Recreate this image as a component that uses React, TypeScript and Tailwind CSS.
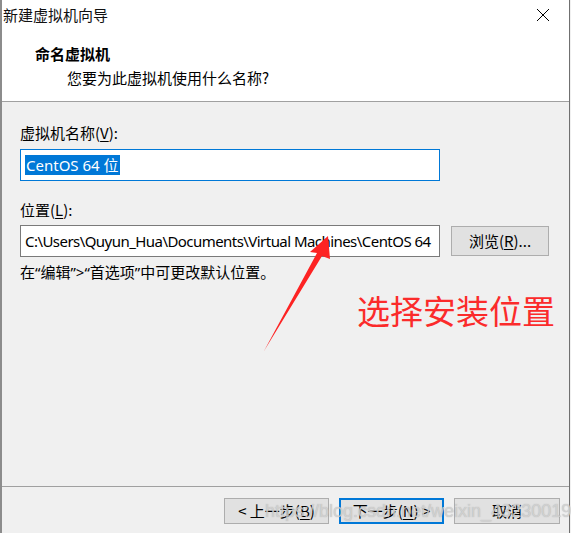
import React from 'react';

const ui = { fontFamily: '"Segoe UI", "Noto Sans", "Noto Sans CJK SC", sans-serif' };
const cjk = { fontFamily: '"Noto Sans CJK SC", "Noto Sans", sans-serif' };

function Key({ k }: { k: string }) {
  return <span className="underline underline-offset-2">{k}</span>;
}

function Q({ c }: { c: string }) {
  return <span style={ui}>{c}</span>;
}

function WinButton({ children, primary }: { children: React.ReactNode; primary?: boolean }) {
  return (
    <div
      className={`flex h-[26px] items-center justify-center bg-[#e1e1e1] text-[15px] text-black ${
        primary ? 'border-2 border-[#0078d7]' : 'border border-[#adadad]'
      }`}
    >
      {children}
    </div>
  );
}

export default function App() {
  return (
    <div className="relative h-[533px] w-[571px] overflow-hidden bg-[#f0f0f0]" style={cjk}>
      <div className="flex h-full w-[570px] flex-col border-l-2 border-r border-l-[#8c8c8c] border-r-[#707070]">
        {/* Header */}
        <div className="h-[102px] shrink-0 border-b border-[#a0a0a0] bg-white">
          <div className="flex h-[29px] items-center justify-between pl-[1px] pr-[19px]">
            <span className="text-[15px] leading-none text-[#111]">新建虚拟机向导</span>
            <svg width="14" height="14" viewBox="0 0 14 14" className="text-black">
              <path d="M1 1 L13 13 M13 1 L1 13" stroke="currentColor" strokeWidth="1" />
            </svg>
          </div>
          <div className="pl-[33px] pt-[16px] text-[15px] font-bold leading-[18px] text-black">命名虚拟机</div>
          <div className="pl-[65px] pt-[6px] text-[15px] leading-[18px] text-black">您要为此虚拟机使用什么名称?</div>
        </div>

        {/* Body */}
        <div className="flex flex-1 flex-col px-[18px]">
          <div className="pt-[22px] text-[15px] leading-[18px] text-black">
            虚拟机名称(<Key k="V" />):
          </div>
          <div className="mt-[7px] flex h-[32px] w-[420px] items-center border border-[#0078d7] bg-white pl-[4px]">
            <span className="bg-[#0078d7] px-[1px] text-[15px] leading-[20px] text-white" style={ui}>
              CentOS 64 位
            </span>
          </div>

          <div className="pt-[20px] text-[15px] leading-[18px] text-black">
            位置(<Key k="L" />):
          </div>
          <div className="mt-[6px] flex items-center gap-[11px]">
            <div className="flex h-[32px] w-[420px] items-center overflow-hidden whitespace-nowrap border border-[#7a7a7a] bg-white pl-[4px] text-[15px] tracking-[-0.55px] text-black" style={ui}>
              C:\Users\Quyun_Hua\Documents\Virtual Machines\CentOS 64
            </div>
            <div className="flex h-[30px] w-[98px] items-center justify-center border border-[#adadad] bg-[#e1e1e1] text-[15px] text-black">
              浏览(<Key k="R" />)...
            </div>
          </div>
          <div className="pt-[6px] text-[15px] leading-[18px] text-black">
            在<Q c="“" />编辑<Q c="”>“" />首选项<Q c="”" />中可更改默认位置。
          </div>

          <div className="flex-1" />
        </div>

        {/* Footer */}
        <div className="h-[47px] shrink-0 border-t border-[#a0a0a0]">
          <div className="grid grid-cols-[105px_105px_106px] justify-end gap-[10px] pr-[9px] pt-[11px]">
            <WinButton>&lt; 上一步(<Key k="B" />)</WinButton>
            <WinButton primary>下一步(<Key k="N" />) &gt;</WinButton>
            <WinButton>取消</WinButton>
          </div>
        </div>
      </div>

      {/* Annotation overlays */}
      <div className="absolute left-[357px] top-[290px] text-[33px] leading-[40px] text-[#fb2b2b]">选择安装位置</div>
      <svg className="absolute left-0 top-0" width="571" height="533" viewBox="0 0 571 533">
        <polygon points="328,236 310,252 317,253 264,351 322,256 330,259" fill="#fd2323" />
      </svg>
      <div
        className="absolute left-[265px] top-[500px] whitespace-nowrap text-[18px] leading-[22px] text-[#d8d8d8]/80"
        style={{ fontFamily: '"Liberation Sans", Arial, sans-serif', textShadow: '0 0 1px rgba(120,120,120,0.5)' }}
      >
        https://blog.csdn.net/weixin_43230019
      </div>
    </div>
  );
}
